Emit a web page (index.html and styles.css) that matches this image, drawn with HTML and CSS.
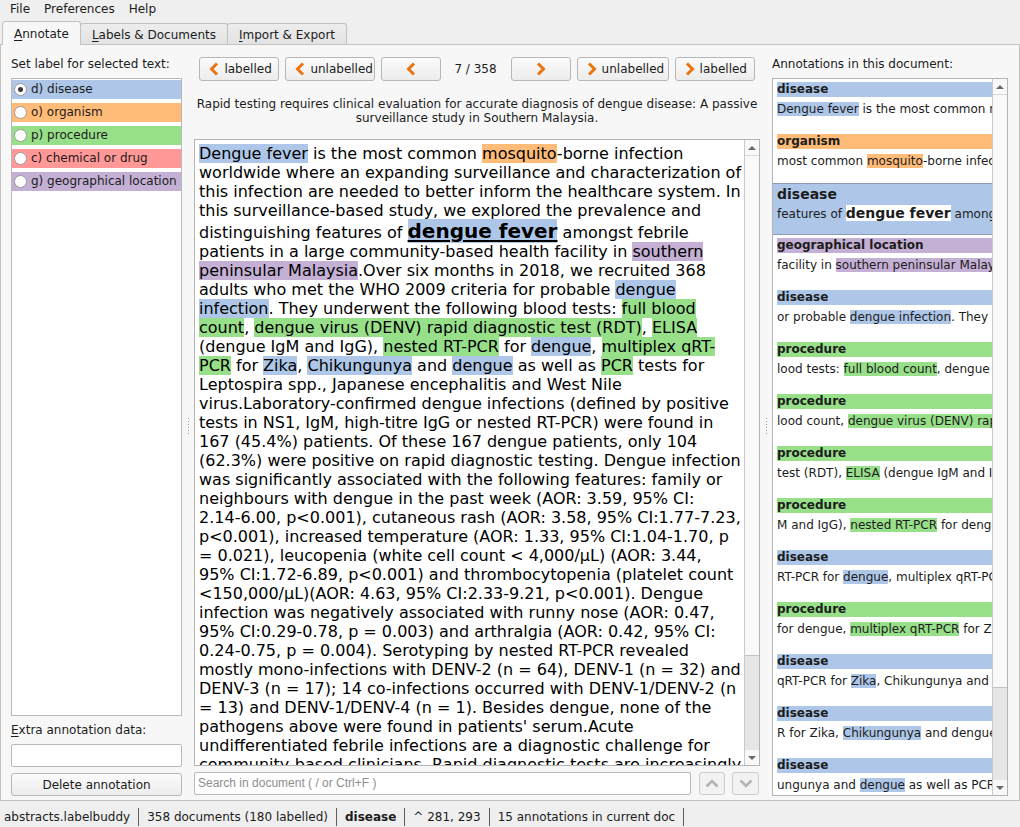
FILE: index.html
```html
<!DOCTYPE html>
<html>
<head>
<meta charset="utf-8">
<title>labelbuddy</title>
<link rel="stylesheet" href="styles.css">
</head>
<body>
<div class="window">
  <div class="menubar">
    <span class="menu">File</span><span class="menu">Preferences</span><span class="menu">Help</span>
  </div>
  <div class="tabbar">
    <div class="tab active"><u>A</u>nnotate</div>
    <div class="tab"><u>L</u>abels &amp; Documents</div>
    <div class="tab"><u>I</u>mport &amp; Export</div>
  </div>
  <div class="pane">
    <div class="left">
      <div class="caption">Set label for selected text:</div>
      <div class="labellist">
        <div class="label c-dis"><span class="radio checked"></span>d) disease</div>
        <div class="label c-org"><span class="radio"></span>o) organism</div>
        <div class="label c-proc"><span class="radio"></span>p) procedure</div>
        <div class="label c-chem"><span class="radio"></span>c) chemical or drug</div>
        <div class="label c-geo"><span class="radio"></span>g) geographical location</div>
      </div>
      <div class="caption extra"><u>E</u>xtra annotation data:</div>
      <div class="input"></div>
      <div class="button delete">Delete annotation</div>
    </div>
    <div class="splitter"><span class="grip"></span></div>
    <div class="center">
      <div class="nav">
        <div class="button navbtn w80"><svg class="chev" width="10" height="14" viewBox="0 0 10 14"><polyline points="8,1.5 2.5,7 8,12.5"/></svg>labelled</div>
        <div class="button navbtn w90"><svg class="chev" width="10" height="14" viewBox="0 0 10 14"><polyline points="8,1.5 2.5,7 8,12.5"/></svg>unlabelled</div>
        <div class="button navbtn w60 solo"><svg class="chev" width="10" height="14" viewBox="0 0 10 14"><polyline points="8,1.5 2.5,7 8,12.5"/></svg></div>
        <div class="counter">7 / 358</div>
        <div class="button navbtn w60 solo"><svg class="chev" width="10" height="14" viewBox="0 0 10 14"><polyline points="2,1.5 7.5,7 2,12.5"/></svg></div>
        <div class="button navbtn w92"><svg class="chev" width="10" height="14" viewBox="0 0 10 14"><polyline points="2,1.5 7.5,7 2,12.5"/></svg>unlabelled</div>
        <div class="button navbtn w80"><svg class="chev" width="10" height="14" viewBox="0 0 10 14"><polyline points="2,1.5 7.5,7 2,12.5"/></svg>labelled</div>
      </div>
      <div class="doctitle">Rapid testing requires clinical evaluation for accurate diagnosis of dengue disease: A passive<br>surveillance study in Southern Malaysia.</div>
      <div class="textbox">
        <div class="doctext"><span class="c-dis">Dengue fever</span> is the most common <span class="c-org">mosquito</span>-borne infection<br>
worldwide where an expanding surveillance and characterization of<br>
this infection are needed to better inform the healthcare system. In<br>
this surveillance-based study, we explored the prevalence and<br>
distinguishing features of <span class="c-dis current">dengue fever</span> amongst febrile<br>
patients in a large community-based health facility in <span class="c-geo">southern<br>peninsular Malaysia</span>.Over six months in 2018, we recruited 368<br>
adults who met the WHO 2009 criteria for probable <span class="c-dis">dengue<br>infection</span>. They underwent the following blood tests: <span class="c-proc">full blood<br>count</span>, <span class="c-proc">dengue virus (DENV) rapid diagnostic test (RDT)</span>, <span class="c-proc">ELISA</span><br>
(dengue IgM and IgG), <span class="c-proc">nested RT-PCR</span> for <span class="c-dis">dengue</span>, <span class="c-proc">multiplex qRT-<br>PCR</span> for <span class="c-dis">Zika</span>, <span class="c-dis">Chikungunya</span> and <span class="c-dis">dengue</span> as well as <span class="c-proc">PCR</span> tests for<br>
Leptospira spp., Japanese encephalitis and West Nile<br>
virus.Laboratory-confirmed dengue infections (defined by positive<br>
tests in NS1, IgM, high-titre IgG or nested RT-PCR) were found in<br>
167 (45.4%) patients. Of these 167 dengue patients, only 104<br>
(62.3%) were positive on rapid diagnostic testing. Dengue infection<br>
was significantly associated with the following features: family or<br>
neighbours with dengue in the past week (AOR: 3.59, 95% CI:<br>
2.14-6.00, p&lt;0.001), cutaneous rash (AOR: 3.58, 95% CI:1.77-7.23,<br>
p&lt;0.001), increased temperature (AOR: 1.33, 95% CI:1.04-1.70, p<br>
= 0.021), leucopenia (white cell count &lt; 4,000/μL) (AOR: 3.44,<br>
95% CI:1.72-6.89, p&lt;0.001) and thrombocytopenia (platelet count<br>
&lt;150,000/μL)(AOR: 4.63, 95% CI:2.33-9.21, p&lt;0.001). Dengue<br>
infection was negatively associated with runny nose (AOR: 0.47,<br>
95% CI:0.29-0.78, p = 0.003) and arthralgia (AOR: 0.42, 95% CI:<br>
0.24-0.75, p = 0.004). Serotyping by nested RT-PCR revealed<br>
mostly mono-infections with DENV-2 (n = 64), DENV-1 (n = 32) and<br>
DENV-3 (n = 17); 14 co-infections occurred with DENV-1/DENV-2 (n<br>
= 13) and DENV-1/DENV-4 (n = 1). Besides dengue, none of the<br>
pathogens above were found in patients' serum.Acute<br>
undifferentiated febrile infections are a diagnostic challenge for<br>
community-based clinicians. Rapid diagnostic tests are increasingly</div>
        <div class="vscroll">
          <div class="sb-btn"><span class="tri up"></span></div>
          <div class="sb-handle text-handle"></div>
          <div class="sb-track"></div>
          <div class="sb-btn"><span class="tri down"></span></div>
        </div>
      </div>
      <div class="searchrow">
        <div class="search">Search in document ( / or Ctrl+F )</div>
        <div class="sbtn"><svg width="14" height="9" viewBox="0 0 14 9"><polyline points="1.5,7.5 7,2 12.5,7.5"/></svg></div>
        <div class="sbtn wide"><svg width="14" height="9" viewBox="0 0 14 9"><polyline points="1.5,1.5 7,7 12.5,1.5"/></svg></div>
      </div>
    </div>
    <div class="splitter"><span class="grip"></span></div>
    <div class="right">
      <div class="caption">Annotations in this document:</div>
      <div class="annlist">
        <div class="annitems">
          <div class="ann"><div class="ann-label c-dis">disease</div><div class="ann-snip"><span class="c-dis">Dengue fever</span> is the most common mosquito</div></div>
          <div class="ann"><div class="ann-label c-org">organism</div><div class="ann-snip">most common <span class="c-org">mosquito</span>-borne infection</div></div>
          <div class="ann sel"><div class="ann-label">disease</div><div class="ann-snip">features of <span class="sel-hl">dengue fever</span> amongst</div></div>
          <div class="ann"><div class="ann-label c-geo">geographical location</div><div class="ann-snip">facility in <span class="c-geo">southern peninsular Malaysia</span></div></div>
          <div class="ann"><div class="ann-label c-dis">disease</div><div class="ann-snip">or probable <span class="c-dis">dengue infection</span>. They underwent</div></div>
          <div class="ann"><div class="ann-label c-proc">procedure</div><div class="ann-snip">lood tests: <span class="c-proc">full blood count</span>, dengue virus</div></div>
          <div class="ann"><div class="ann-label c-proc">procedure</div><div class="ann-snip">lood count, <span class="c-proc">dengue virus (DENV) rapid diagnostic test (RDT)</span></div></div>
          <div class="ann"><div class="ann-label c-proc">procedure</div><div class="ann-snip">test (RDT), <span class="c-proc">ELISA</span> (dengue IgM and IgG)</div></div>
          <div class="ann"><div class="ann-label c-proc">procedure</div><div class="ann-snip">M and IgG), <span class="c-proc">nested RT-PCR</span> for dengue,</div></div>
          <div class="ann"><div class="ann-label c-dis">disease</div><div class="ann-snip">RT-PCR for <span class="c-dis">dengue</span>, multiplex qRT-PCR</div></div>
          <div class="ann"><div class="ann-label c-proc">procedure</div><div class="ann-snip">for dengue, <span class="c-proc">multiplex qRT-PCR</span> for Zika</div></div>
          <div class="ann"><div class="ann-label c-dis">disease</div><div class="ann-snip">qRT-PCR for <span class="c-dis">Zika</span>, Chikungunya and dengue</div></div>
          <div class="ann"><div class="ann-label c-dis">disease</div><div class="ann-snip">R for Zika, <span class="c-dis">Chikungunya</span> and dengue as</div></div>
          <div class="ann"><div class="ann-label c-dis">disease</div><div class="ann-snip">ungunya and <span class="c-dis">dengue</span> as well as PCR tests</div></div>
          <div class="ann"><div class="ann-label c-proc">procedure</div><div class="ann-snip">e as well as <span class="c-proc">PCR</span> tests for</div></div>
        </div>
        <div class="vscroll">
          <div class="sb-btn"><span class="tri up"></span></div>
          <div class="sb-handle list-handle"></div>
          <div class="sb-track"></div>
          <div class="sb-btn"><span class="tri down"></span></div>
        </div>
      </div>
    </div>
  </div>
  <div class="statusbar">
    <span class="sect">abstracts.labelbuddy</span><span class="sect">358 documents (180 labelled)</span><span class="sect bold">disease</span><span class="sect">^ 281, 293</span><span class="sect">15 annotations in current doc</span>
  </div>
</div>
</body>
</html>
```
FILE: styles.css
```css
* { box-sizing: border-box; }
html, body { margin: 0; padding: 0; }
body {
  width: 1020px;
  height: 827px;
  overflow: hidden;
  background: #efefef;
  font-family: "DejaVu Sans", sans-serif;
  font-size: 12px;
  color: #1c1c1c;
}
u { text-decoration-thickness: 1px; text-underline-offset: 2px; }

.window { display: flex; flex-direction: column; height: 827px; }

/* menu bar */
.menubar { height: 21px; display: flex; padding-left: 3px; line-height: 19px; }
.menu { padding: 0 7px; }

/* tabs */
.tabbar {
  height: 23px;
  display: flex;
  align-items: flex-end;
  padding-left: 2px;
  position: relative;
  z-index: 1;
}
.tab {
  height: 21px;
  line-height: 20px;
  padding: 1px 11px 0;
  border: 1px solid #c2c2c2;
  border-bottom: none;
  border-radius: 3px 3px 0 0;
  background: linear-gradient(#ededed, #e3e3e3);
  margin-left: -1px;
}
.tab:first-child { margin-left: 0; }
.tab.active {
  height: 24px;
  margin-bottom: -1px;
  padding-top: 2px;
  background: #f7f7f7;
  position: relative;
  z-index: 2;
}

/* main pane */
.pane {
  height: 757px;
  display: flex;
  background: #f7f7f7;
  border: 1px solid #c2c2c2;
}
.caption { height: 14px; line-height: 14px; white-space: nowrap; }

.left {
  width: 181px;
  padding: 12px 0 4px 10px;
  display: flex;
  flex-direction: column;
}
.labellist {
  margin-top: 7px;
  flex: 1;
  background: #fff;
  border: 1px solid #b9b9b9;
  padding-top: 1px;
}
.label {
  height: 19px;
  line-height: 19px;
  margin-bottom: 4px;
  display: flex;
  align-items: center;
  white-space: nowrap;
}
.radio {
  width: 13px;
  height: 13px;
  border-radius: 50%;
  background: #fff;
  border: 1px solid #9a9a9a;
  margin: 0 4px 0 2px;
  display: flex;
  align-items: center;
  justify-content: center;
}
.radio.checked::after {
  content: "";
  width: 5px;
  height: 5px;
  border-radius: 50%;
  background: #3a3a3a;
}
.caption.extra { margin-top: 7px; }
.input {
  margin-top: 7px;
  height: 23px;
  background: #fff;
  border: 1px solid #b9b9b9;
  border-radius: 2px;
}
.button {
  height: 24px;
  border: 1px solid #b7b7b7;
  border-radius: 3px;
  background: linear-gradient(#fbfbfb, #ececec);
  display: flex;
  align-items: center;
  justify-content: center;
  white-space: nowrap;
}
.button.delete { margin-top: 6px; height: 23px; }

/* splitters */
.splitter {
  width: 12px;
  display: flex;
  align-items: center;
  justify-content: center;
  padding-top: 8px;
}
.grip {
  width: 1px;
  height: 17px;
  background: repeating-linear-gradient(to bottom, #9c9c9c 0 1px, transparent 1px 3px);
}

/* center */
.center {
  width: 566px;
  padding: 11px 0 5px 0;
  display: flex;
  flex-direction: column;
}
.nav { display: flex; justify-content: center; align-items: center; gap: 6px; height: 25px; padding-top: 1px; }
.navbtn { justify-content: flex-start; padding-left: 9px; gap: 5px; }
.navbtn.solo { justify-content: center; padding-left: 0; }
.w60 { width: 60px; }
.w80 { width: 80px; }
.w90 { width: 90px; }
.w92 { width: 92px; }
.chev polyline { fill: none; stroke: #ea7410; stroke-width: 3; stroke-linecap: butt; stroke-linejoin: miter; }
.counter { padding: 0 8px 0 7px; }

.doctitle {
  margin-top: 15px;
  height: 28px;
  line-height: 14px;
  padding-top: 1px;
  text-align: center;
  white-space: nowrap;
}
.textbox {
  margin-top: 15px;
  flex: 1;
  display: flex;
  background: #fff;
  border: 1px solid #b4b4b4;
  overflow: hidden;
}
.doctext {
  flex: 1;
  padding: 4px 0 0 4px;
  font-size: 16px;
  line-height: 19px;
  color: #000;
  white-space: nowrap;
  overflow: hidden;
}
.current {
  font-weight: bold;
  font-size: 20px;
  line-height: 22px;
  text-decoration: underline;
  text-decoration-thickness: 2px;
  text-underline-offset: 2px;
}

.c-dis { background: #aec7e8; }
.c-org { background: #ffbb78; }
.c-proc { background: #98df8a; }
.c-chem { background: #ff9896; }
.c-geo { background: #c5b0d5; }

/* scrollbars */
.vscroll {
  width: 15px;
  flex: none;
  display: flex;
  flex-direction: column;
  background: #e6e6e6;
  border-left: 1px solid #c9c9c9;
}
.sb-btn {
  height: 15px;
  flex: none;
  background: #f8f8f8;
  display: flex;
  align-items: center;
  justify-content: center;
}
.tri { width: 0; height: 0; border-left: 4px solid transparent; border-right: 4px solid transparent; }
.tri.up { border-bottom: 4px solid #6a6a6a; }
.tri.down { border-top: 4px solid #6a6a6a; }
.sb-handle {
  flex: none;
  background: #f9f9f9;
  border-top: 1px solid #d6d6d6;
  border-bottom: 1px solid #c4c4c4;
}
.text-handle { height: 501px; }
.list-handle { height: 594px; }
.sb-track { flex: 1; }

/* search row */
.searchrow { margin-top: 6px; height: 23px; display: flex; gap: 7px; }
.search {
  width: 497px;
  height: 23px;
  background: #fff;
  border: 1px solid #b9b9b9;
  border-radius: 2px;
  padding-left: 3px;
  line-height: 21px;
  color: #8e8e8e;
  font-family: "Liberation Sans", sans-serif;
  font-size: 12px;
  margin-right: 1px;
}
.sbtn {
  width: 26px;
  height: 23px;
  border: 1px solid #cdcdcd;
  border-radius: 3px;
  background: #f2f2f2;
  display: flex;
  align-items: center;
  justify-content: center;
}
.sbtn.wide { width: 27px; }
.sbtn polyline { fill: none; stroke: #b4b4b4; stroke-width: 2.5; }

/* right panel */
.right {
  width: 236px;
  padding: 12px 0 4px 0;
  display: flex;
  flex-direction: column;
}
.annlist {
  margin-top: 7px;
  flex: 1;
  display: flex;
  background: #fff;
  border: 1px solid #b4b4b4;
  overflow: hidden;
}
.annitems { flex: 1; overflow: hidden; min-width: 0; }
.ann {
  height: 52px;
  padding: 3px 0 0 4px;
  white-space: nowrap;
  overflow: hidden;
}
.ann-label { font-weight: bold; line-height: 15px; height: 15px; }
.ann-snip { margin-top: 4px; line-height: 16px; }
.ann.sel {
  background: #aec7e8;
  border-top: 1px solid #8c9db3;
  border-bottom: 1px solid #8c9db3;
  padding-top: 2px;
}
.ann.sel .ann-label { font-size: 14px; line-height: 17px; height: 17px; }
.ann.sel .ann-snip { margin-top: 1px; line-height: 18px; }
.sel-hl { background: #fff; font-weight: bold; font-size: 14px; }

/* status bar */
.statusbar {
  height: 26px;
  display: flex;
  align-items: center;
  padding-top: 6px;
  white-space: nowrap;
}
.sect {
  padding: 0 8px;
  height: 18px;
  line-height: 18px;
  border-right: 1px solid #5e5e5e;
}
.sect:first-child { padding-left: 4px; }
.sect.bold { font-weight: bold; }
```
